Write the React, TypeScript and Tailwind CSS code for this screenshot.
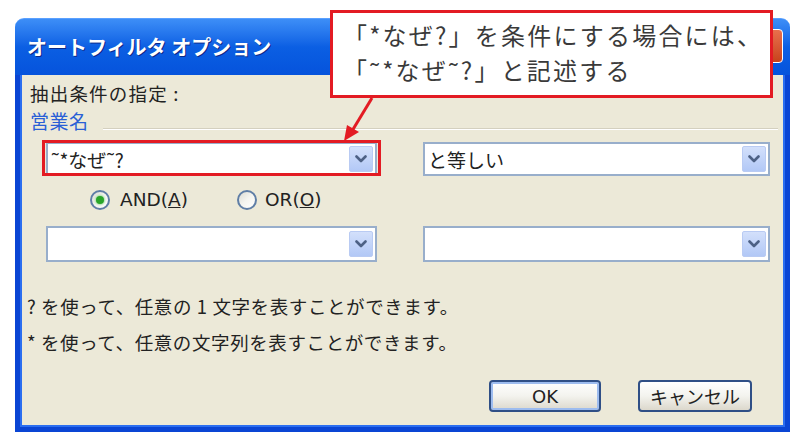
import React from "react";

const jp = "'Noto Sans CJK JP', 'Noto Sans', sans-serif";
const latin = "'DejaVu Sans', 'Noto Sans CJK JP', sans-serif";

function DropBtn() {
  return (
    <div className="w-[24px] h-[26px] rounded-[2px] border border-[#b9cbf3] bg-gradient-to-b from-[#d3e0fb] to-[#b2c8f6] flex items-center justify-center">
      <svg width="12" height="8" viewBox="0 0 12 8">
        <path d="M1.5 1.5 L6 6 L10.5 1.5" fill="none" stroke="#4d6185" strokeWidth="2.6" strokeLinecap="round" strokeLinejoin="round" />
      </svg>
    </div>
  );
}

function Combo({ w, h, text }: { w: string; h: string; text?: string }) {
  return (
    <div className={`${w} ${h} border-2 border-[#98aecb] bg-white flex items-center justify-between pl-[3px] pr-[2px]`}>
      <span className="text-[19px] text-[#222] leading-none" style={{ fontFamily: jp }}>
        {text}
      </span>
      <DropBtn />
    </div>
  );
}

function Radio({ checked }: { checked?: boolean }) {
  return (
    <div className="w-[20px] h-[20px] rounded-full border-2 border-[#5f7ea6] bg-gradient-to-br from-[#dcdcd4] via-[#f4f4f0] to-white flex items-center justify-center">
      {checked && <div className="w-[8px] h-[8px] rounded-full bg-[#2aa52a] shadow-[0_0_2px_1px_#9fe09f]" />}
    </div>
  );
}

export default function App() {
  return (
    <div className="relative w-[800px] h-[438px] bg-white overflow-hidden" style={{ fontFamily: jp }}>
      <div className="ml-[15px] pt-[18px]">
        <div className="w-[775px] h-[414px] flex flex-col">
          {/* title bar */}
          <div className="h-[57px] rounded-t-[9px] bg-gradient-to-b from-[#3d8ef7] via-[#0b5fe3] to-[#0653dc] flex items-center justify-between pl-[12px] pr-[7px] border-t border-[#5aa0ff]">
            <span className="text-white font-bold text-[20px] [text-shadow:1px_1px_0_#0a2a8a]" style={{ fontFamily: jp }}>
              オートフィルタ オプション
            </span>
            <div className="w-[31px] h-[34px] rounded-[4px] border border-white bg-gradient-to-b from-[#e8704c] to-[#c8421a] mb-[3px]" />
          </div>
          {/* client */}
          <div className="flex-1 border-x-[5px] border-b-[5px] border-[#0a45d4] bg-[#ece9d8] flex flex-col shadow-[inset_2px_0_0_#2b6ef0,inset_-2px_0_0_#2b6ef0,inset_0_-2px_0_#2b6ef0]">
            <div className="pt-[6px] pl-[10px] text-[18.5px] tracking-[1.2px] leading-[24px] text-[#222]">抽出条件の指定 :</div>
            <div className="mt-[4px] pl-[10px] flex items-center h-[24px]">
              <span className="text-[19px] tracking-[0.5px] text-[#2a5fd6] leading-[24px]">営業名</span>
              <div className="flex-1 ml-[14px] mr-[7px] self-end mb-[3px] border-t border-[#d4d0bf] border-b border-b-white" />
            </div>
            {/* row 1 */}
            <div className="mt-[9px] pl-[26px] flex gap-[46px]">
              <Combo w="w-[331px]" h="h-[34px]" text="˜*なぜ˜?" />
              <Combo w="w-[347px]" h="h-[34px]" text="と等しい" />
            </div>
            {/* radios */}
            <div className="mt-[12px] h-[24px] pl-[70px] flex items-center" style={{ fontFamily: latin }}>
              <div className="w-[147px] flex items-center gap-[10px]">
                <Radio checked />
                <span className="text-[18.5px] text-[#222]">
                  AND(<span className="underline">A</span>)
                </span>
              </div>
              <div className="flex items-center gap-[8px]">
                <Radio />
                <span className="text-[18.5px] text-[#222]">
                  OR(<span className="underline">O</span>)
                </span>
              </div>
            </div>
            {/* row 2 */}
            <div className="mt-[14px] pl-[26px] flex gap-[46px]">
              <Combo w="w-[331px]" h="h-[36px]" />
              <Combo w="w-[347px]" h="h-[36px]" />
            </div>
            <div className="mt-[26px] pl-[7px] text-[18.5px] tracking-[0.6px] leading-[36px] text-[#222]">
              <div>? を使って、任意の 1 文字を表すことができます。</div>
              <div>* を使って、任意の文字列を表すことができます。</div>
            </div>
            <div className="mt-[20px] pr-[33px] flex justify-end gap-[37px]">
              <div className="w-[112px] h-[32px] rounded-[4px] border-2 border-[#2f4f86] bg-gradient-to-b from-white via-[#f3f3ee] to-[#dcd8cc] shadow-[inset_0_0_0_2px_#9dbcef] flex items-center justify-center text-[18px] text-[#222]" style={{ fontFamily: latin }}>
                OK
              </div>
              <div className="w-[114px] h-[32px] rounded-[4px] border-2 border-[#2f4f86] bg-gradient-to-b from-white via-[#f3f3ee] to-[#dcd8cc] flex items-center justify-center text-[18px] text-[#222]">
                キャンセル
              </div>
            </div>
          </div>
        </div>
      </div>

      {/* red highlight around first combo */}
      <div className="absolute left-[42px] top-[140px] w-[339px] h-[36px] border-[3px] border-[#e31b23]" />

      {/* callout */}
      <div className="absolute left-[330px] top-[10px] w-[443px] h-[88px] bg-white border-[3px] border-[#e31b23] pl-[10px] pt-[4px] text-[24px] tracking-[2.2px] leading-[35px] text-[#3a3a3a]">
        <div>「*なぜ?」を条件にする場合には、</div>
        <div>「˜*なぜ˜?」と記述する</div>
      </div>

      {/* arrow */}
      <svg className="absolute left-[330px] top-[95px]" width="60" height="50" viewBox="0 0 60 50">
        <line x1="42" y1="3" x2="22" y2="36" stroke="#e31b23" strokeWidth="3" />
        <polygon points="14,46 17,30 29,37" fill="#e31b23" />
      </svg>
    </div>
  );
}
